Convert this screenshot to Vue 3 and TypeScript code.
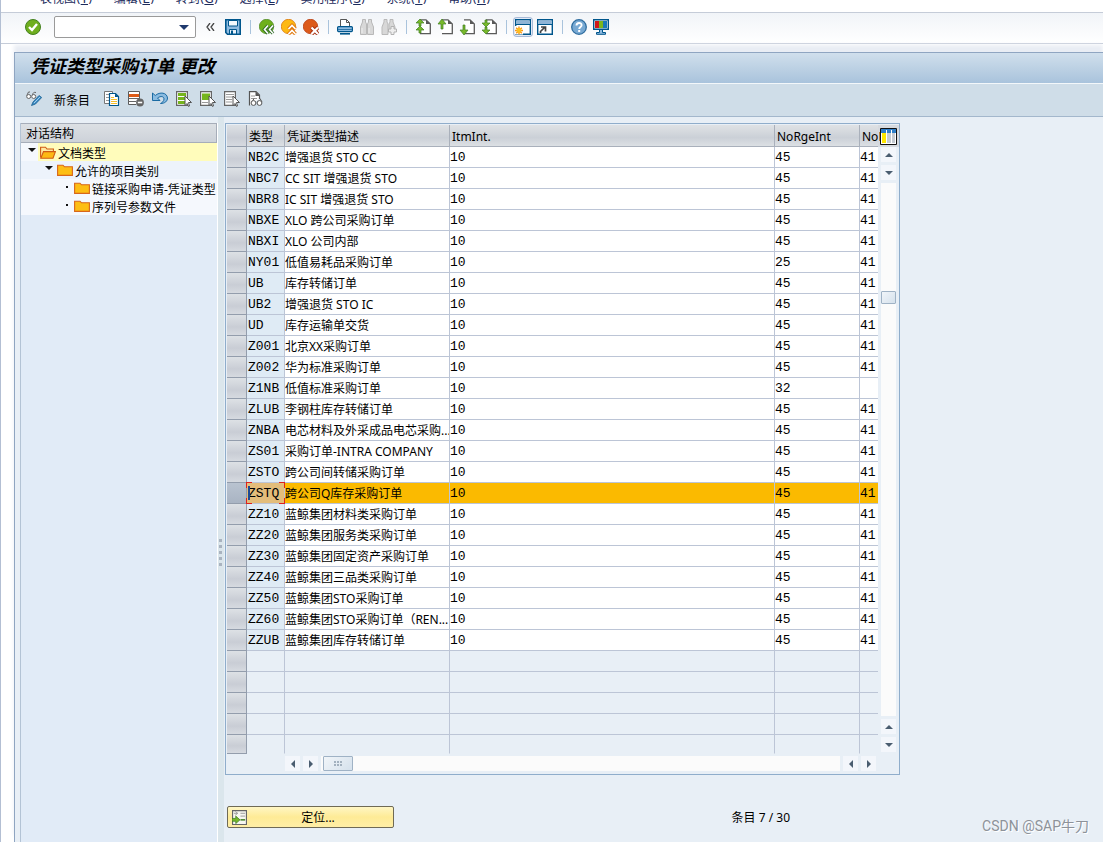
<script setup lang="ts">
import { ref } from 'vue'

interface Row {
  type: string
  desc: string
  itm: string
  rge: string
  ext: string
}

const r = (type: string, desc: string, rge = '45', ext = '41'): Row => ({ type, desc, itm: '10', rge, ext })

const rows: Row[] = [
  r('NB2C', '增强退货 STO CC'),
  r('NBC7', 'CC SIT 增强退货 STO'),
  r('NBR8', 'IC SIT 增强退货 STO'),
  r('NBXE', 'XLO 跨公司采购订单'),
  r('NBXI', 'XLO 公司内部'),
  r('NY01', '低值易耗品采购订单', '25'),
  r('UB', '库存转储订单'),
  r('UB2', '增强退货 STO IC'),
  r('UD', '库存运输单交货'),
  r('Z001', '北京XX采购订单'),
  r('Z002', '华为标准采购订单'),
  r('Z1NB', '低值标准采购订单', '32', ''),
  r('ZLUB', '李钢柱库存转储订单'),
  r('ZNBA', '电芯材料及外采成品电芯采购...'),
  r('ZS01', '采购订单-INTRA COMPANY'),
  r('ZSTO', '跨公司间转储采购订单'),
  r('ZSTQ', '跨公司Q库存采购订单'),
  r('ZZ10', '蓝鲸集团材料类采购订单'),
  r('ZZ20', '蓝鲸集团服务类采购订单'),
  r('ZZ30', '蓝鲸集团固定资产采购订单'),
  r('ZZ40', '蓝鲸集团三品类采购订单'),
  r('ZZ50', '蓝鲸集团STO采购订单'),
  r('ZZ60', '蓝鲸集团STO采购订单（REN...'),
  r('ZZUB', '蓝鲸集团库存转储订单'),
]
const emptyRows = 5
const selected = ref('ZSTQ')
const command = ref('')

const menus = [
  { text: '表视图', key: 'T' },
  { text: '编辑', key: 'E' },
  { text: '转到', key: 'G' },
  { text: '选择', key: 'L' },
  { text: '实用程序', key: 'S' },
  { text: '系统', key: 'Y' },
  { text: '帮助', key: 'H' },
]

const tree = [
  { label: '文档类型', level: 0, open: true, folderOpen: true },
  { label: '允许的项目类别', level: 1, open: true, folderOpen: false },
  { label: '链接采购申请-凭证类型', level: 2, open: false, folderOpen: false },
  { label: '序列号参数文件', level: 2, open: false, folderOpen: false },
]

const pages = [
  { label: '首页', arrows: ['M5 0 9 4H6V7H4V4H1Z', 'M5 7 9 11H6V14H4V11H1Z'] },
  { label: '上一页', arrows: ['M5 0 9 5H6V10H4V5H1Z'] },
  { label: '下一页', arrows: ['M4 6H6V11H9L5 16 1 11H4Z'] },
  { label: '末页', arrows: ['M4 1H6V4H9L5 8 1 4H4Z', 'M4 8H6V11H9L5 15 1 11H4Z'] },
]
</script>

<template>
  <div class="app">
    <nav class="menubar" aria-label="菜单">
      <button v-for="m in menus" :key="m.key" type="button">{{ m.text }}(<u>{{ m.key }}</u>)</button>
    </nav>

    <div class="systembar">
      <button type="button" class="icon" aria-label="输入">
        <svg viewBox="0 0 16 16"><circle cx="8" cy="8" r="7.5" fill="#6fae1e" stroke="#43801f" /><path d="M4 8 7 11 12 5" fill="none" stroke="#fff" stroke-width="2.4" /></svg>
      </button>
      <div class="combo">
        <input v-model="command" type="text" aria-label="命令" />
        <button type="button" aria-label="历史"><svg viewBox="0 0 10 5"><path d="M0 0H10L5 5Z" fill="#1f3a6e" /></svg></button>
      </div>
      <button type="button" class="fold" aria-label="折叠">
        <svg viewBox="0 0 9 8"><path d="M4 0 1 4 4 8M8 0 5 4 8 8" fill="none" stroke="#444" stroke-width="1.3" /></svg>
      </button>
      <button type="button" class="icon save" aria-label="保存">
        <svg viewBox="0 0 16 16"><path d="M.8.8H15.2V15.2H2.5L.8 13.5Z" fill="#8fbbe0" stroke="#00568c" stroke-width="1.6" /><path d="M3.5 1.5H12.5V7H3.5Z" fill="#f4f9fd" stroke="#00568c" /><path d="M4.5 10.5H11.5V15H4.5Z" fill="#e9f2fa" stroke="#00568c" /><path d="M6 11.5H8V15H6Z" fill="#00568c" /></svg>
      </button>
      <i class="sep"></i>
      <button type="button" class="icon" aria-label="返回">
        <svg viewBox="0 0 16 16"><circle cx="7.5" cy="7.5" r="7.2" fill="#6eb01c" stroke="#4b8422" stroke-width=".7" /><path d="M9 6.5 5.5 10.500 9 14.500M14 6.500 10.500 10.500 14 14.500" fill="none" stroke="#2f6b27" stroke-width="3.400" /><path d="M9 6.500 5.500 10.500 9 14.500M14 6.500 10.500 10.500 14 14.500" fill="none" stroke="#fff" stroke-width="1.600" /></svg>
      </button>
      <button type="button" class="icon" aria-label="退出">
        <svg viewBox="0 0 16 16"><circle cx="7.5" cy="7.5" r="7.2" fill="#fdb913" stroke="#d9760c" stroke-width=".8" /><path d="M7.500 10 11 6.500 14.500 10M7.500 15 11 11.500 14.500 15" fill="none" stroke="#e0780c" stroke-width="3.600" /><path d="M7.500 10 11 6.500 14.500 10M7.500 15 11 11.500 14.500 15" fill="none" stroke="#fff" stroke-width="1.700" /></svg>
      </button>
      <button type="button" class="icon" aria-label="取消">
        <svg viewBox="0 0 16 16"><circle cx="7.5" cy="7.5" r="7.2" fill="#dc5a1a" stroke="#b73d12" stroke-width=".8" /><path d="M8.500 8.500 15 15M15 8.500 8.500 15" stroke="#a62f10" stroke-width="4" /><path d="M8.500 8.500 15 15M15 8.500 8.500 15" stroke="#fff" stroke-width="2.2" /></svg>
      </button>
      <i class="sep"></i>
      <button type="button" class="icon" aria-label="打印">
        <svg viewBox="0 0 16 16"><path d="M3.5 8V.5H9.500L12.500 3.500V8" fill="#fff" stroke="#555" /><path d="M9.500.5V3.500H12.500" fill="none" stroke="#555" /><rect x=".6" y="7.600" width="14.800" height="5" rx="1" fill="#8dbbe0" stroke="#00568c" stroke-width="1.200" /><path d="M1 10.500H15" stroke="#2f77ab" /><path d="M3 14H13V15.600H3Z" fill="#00568c" /></svg>
      </button>
      <button type="button" class="icon" aria-label="查找" disabled>
        <svg viewBox="0 0 16 16"><path d="M3.500.5H6.500V3L7.500 5V15.500H1.500V8L3.500 3ZM9.500.5H12.500V3L14.500 8V15.500H8.500V5L9.500 3Z" fill="#d8d8d8" stroke="#b9b9b9" /><path d="M3 9V14M10 9V14" stroke="#efefef" /></svg>
      </button>
      <button type="button" class="icon" aria-label="继续查找" disabled>
        <svg viewBox="0 0 16 16"><path d="M3 .5H6V3L7 5V15.500H1V8L3 3ZM9 .5H12V3L14 8V12H8V5L9 3Z" fill="#d8d8d8" stroke="#b9b9b9" /><path d="M10 7.500H13V10H15.500V13H13V15.500H10V13H7.500V10H10Z" fill="#eee" stroke="#b2b2b2" /></svg>
      </button>
      <i class="sep"></i>
      <button v-for="p in pages" :key="p.label" type="button" class="icon" :aria-label="p.label">
        <svg viewBox="0 0 16 16"><path d="M5 .8H11L15.300 5V14.700H5" fill="#fff" stroke="#5a5a5a" stroke-width="1.300" /><path d="M11 1V5H15.500Z" fill="#5a5a5a" /><path v-for="a in p.arrows" :key="a" :d="a" fill="#78b82a" stroke="#3f7f22" stroke-width=".7" /></svg>
      </button>
      <i class="sep"></i>
      <button type="button" class="icon framed" aria-label="新建会话">
        <svg viewBox="0 0 16 16"><path d="M.7.7H15.300V15.300H.7Z" fill="#fff" stroke="#00568c" stroke-width="1.400" /><path d="M1.400 1.400H14.600V5H1.400Z" fill="#8fb4d6" /><path d="M1 5.500H15" stroke="#00568c" /><path d="M0 7H8V15.500H0Z" fill="#fff" /><path d="M4 7.500V15.500M0 11.500H8M1.200 8.700 6.800 14.300M6.800 8.700 1.200 14.300" stroke="#f7931a" stroke-width="1.400" /><circle cx="4" cy="11.500" r="2.400" fill="#fdc01e" /></svg>
      </button>
      <button type="button" class="icon" aria-label="快捷方式">
        <svg viewBox="0 0 16 16"><path d="M.7.7H15.300V15.300H.7Z" fill="#fff" stroke="#00568c" stroke-width="1.400" /><path d="M1.400 1.400H14.600V5H1.400Z" fill="#8fb4d6" /><path d="M1 5.500H15" stroke="#00568c" /><path d="M3.500 14V12.500L7.500 8.500M4 8H8.500V12.500" fill="none" stroke="#444" stroke-width="1.700" /></svg>
      </button>
      <i class="sep"></i>
      <button type="button" class="icon" aria-label="帮助">
        <svg viewBox="0 0 16 16"><circle cx="8" cy="8" r="7.300" fill="#78a9d3" stroke="#2f6d9f" stroke-width="1.300" /><path d="M5.500 6.500C5.500 3.300 10.700 3.300 10.600 6.200 10.500 8 8.200 8 8.200 10" fill="none" stroke="#fff" stroke-width="1.900" /><rect x="7.200" y="11" width="2" height="2" fill="#fff" /></svg>
      </button>
      <button type="button" class="icon" aria-label="定制布局">
        <svg viewBox="0 0 16 16"><path d="M.7.7H15.300V10.300H.7Z" fill="#fff" stroke="#00568c" stroke-width="1.400" /><path d="M2 2H6V9H2Z" fill="#d01818" /><path d="M6 2H10V9H6Z" fill="#7ab51d" /><path d="M10 2H14V9H10Z" fill="#1878b8" /><path d="M6.500 11V13.500H3.500V15.300H12.500V13.500H9.500V11" fill="#8fbbe0" stroke="#00568c" /></svg>
      </button>
    </div>

    <main class="window">
      <h1>凭证类型采购订单 更改</h1>
      <div class="appbar">
        <button type="button" class="icon" aria-label="显示/更改">
          <svg viewBox="0 0 16 16"><path d="M.8 4.500 2.500 1H4M6.500 4C7 1.500 8 1 10 1.500" fill="none" stroke="#666" /><circle cx="2.700" cy="5.500" r="2" fill="#fff" stroke="#666" /><circle cx="7.700" cy="5.500" r="2" fill="#fff" stroke="#666" /><path d="M5.500 14.500 7 11 13 4.500 15.700 6.500 9.500 13Z" fill="#3d8cc4" stroke="#1b5f91" stroke-width=".8" /><path d="M8 12 14 6" stroke="#a5cdea" /></svg>
        </button>
        <button type="button" class="text">新条目</button>
        <button type="button" class="icon" aria-label="复制为">
          <svg viewBox="0 0 16 16"><path d="M.5.5H8.500V12.500H.5Z" fill="#fff" stroke="#777" /><path d="M2 3.500H5M2 6.500H5M2 9.500H5" stroke="#999" /><path d="M5.500 2.500H11.500L14.500 5.500V14.500H5.500Z" fill="#fff" stroke="#00568c" stroke-width="1.200" /><path d="M11 2.500V6H14.500Z" fill="#00568c" /><path d="M7 6.500H10M7 8.500H13M7 10.500H13M7 12.500H13" stroke="#f5bd2a" stroke-width="1.200" /></svg>
        </button>
        <button type="button" class="icon" aria-label="删除">
          <svg viewBox="0 0 16 16"><path d="M11.500 8V.5H.5V13.500H8" fill="#fff" stroke="#5d5d5d" /><path d="M1 3H11V6H1Z" fill="#dd5b18" /><path d="M.5 7.500H11.500M.5 10.500H8" stroke="#666" /><circle cx="12" cy="11.500" r="3.900" fill="#666" /><path d="M9.800 11.500H14.200" stroke="#fff" stroke-width="1.600" /></svg>
        </button>
        <button type="button" class="icon" aria-label="撤销更改">
          <svg viewBox="0 0 16 16"><path d="M.5 2V9.500H8L5.500 7C9 4.500 12 5.500 12 8S10 11.500 8.500 12.500C13 12.500 15.500 10 15.500 7 15 1.500 8 .5 3.300 4.500Z" fill="#8abbe0" stroke="#1b6ba3" /></svg>
        </button>
        <button type="button" class="icon" aria-label="全选">
          <svg viewBox="0 0 16 16"><path d="M.6.6H11.400V14.400H.6Z" fill="#fff" stroke="#666" stroke-width="1.200" /><path d="M2 3.500H10M2 7.500H10M2 11.500H10" stroke="#76b51d" stroke-width="3" /><path d="M9 5V14.500L11.200 12.500 12.500 15.500 13.500 15 12.500 11.500H15.500Z" fill="#fff" stroke="#555" /></svg>
        </button>
        <button type="button" class="icon" aria-label="选择块">
          <svg viewBox="0 0 16 16"><path d="M.6.6H11.400V14.400H.6Z" fill="#fff" stroke="#666" stroke-width="1.200" /><path d="M2 2.500H10V9H2Z" fill="#76b51d" /><path d="M2 11.500H8" stroke="#999" /><path d="M9 5V14.500L11.200 12.500 12.500 15.500 13.500 15 12.500 11.500H15.500Z" fill="#fff" stroke="#555" /></svg>
        </button>
        <button type="button" class="icon" aria-label="取消全选">
          <svg viewBox="0 0 16 16"><path d="M.6.6H11.400V14.400H.6Z" fill="#fff" stroke="#666" stroke-width="1.200" /><path d="M2 3.500H10M2 6H10M2 8.500H8M2 11H8" stroke="#999" /><path d="M9 5V14.500L11.200 12.500 12.500 15.500 13.500 15 12.500 11.500H15.500Z" fill="#fff" stroke="#555" /></svg>
        </button>
        <button type="button" class="icon" aria-label="显示">
          <svg viewBox="0 0 16 16"><path d="M1.500 14.500V.6H8L11.500 4V8" fill="#fff" stroke="#555" stroke-width="1.200" /><path d="M7.500.5V5H12Z" fill="#555" /><path d="M3 5H7M3 7.500H9" stroke="#999" /><path d="M4 11 6 7.500M14 11 12 7.500" stroke="#555" /><circle cx="5.500" cy="12" r="2.400" fill="#fff" stroke="#555" /><circle cx="11.500" cy="12" r="2.400" fill="#fff" stroke="#555" /></svg>
        </button>
      </div>

      <div class="body">
        <section class="tree">
          <h2>对话结构</h2>
          <ul>
            <li v-for="n in tree" :key="n.label" :class="['lv' + n.level, { current: n.folderOpen }]">
              <span class="node">
                <svg v-if="n.open" class="mark" viewBox="0 0 8 8"><path d="M0 2H8L4 6Z" fill="#111" /></svg>
                <svg v-else class="mark" viewBox="0 0 8 8"><path d="M4 4H6V6H4Z" fill="#111" /></svg>
              </span>
              <a href="#">
                <svg v-if="n.folderOpen" viewBox="0 0 16 13"><path d="M.6 11.500V1.200H5.500L7 3H13.400V6" fill="#ffe9a0" stroke="#cf5a14" stroke-width="1.100" /><path d="M.8 12.300 3.500 5.600H15.400L13 12.300Z" fill="#fdb913" stroke="#cf5a14" stroke-width="1.100" /></svg>
                <svg v-else viewBox="0 0 16 13"><path d="M.6 11.400V1.200H6L7.500 2.800H15.400V11.400Z" fill="#fdbe14" stroke="#d8661a" stroke-width="1.100" /></svg>
                <span>{{ n.label }}</span>
              </a>
            </li>
          </ul>
        </section>
        <div class="splitter"><i></i><i></i><i></i><i></i><i></i></div>

        <section class="content">
          <div class="panel">
            <table>
              <colgroup>
                <col class="c-sel" /><col class="c-type" /><col class="c-desc" /><col /><col class="c-rge" /><col class="c-ext" />
              </colgroup>
              <thead>
                <tr>
                  <th class="sel"></th>
                  <th>类型</th>
                  <th>凭证类型描述</th>
                  <th>ItmInt.</th>
                  <th>NoRgeInt</th>
                  <th><span>NoRgeExt</span></th>
                </tr>
              </thead>
              <tbody>
                <tr v-for="row in rows" :key="row.type" :class="{ selected: row.type === selected }" @click="selected = row.type">
                  <td class="sel"></td>
                  <td class="mono key">{{ row.type }}<i v-if="row.type === selected" class="focus"></i></td>
                  <td>{{ row.desc }}</td>
                  <td class="mono">{{ row.itm }}</td>
                  <td class="mono">{{ row.rge }}</td>
                  <td class="mono">{{ row.ext }}</td>
                </tr>
                <tr v-for="n in emptyRows" :key="n" class="empty">
                  <td class="sel"></td><td></td><td></td><td></td><td></td><td></td>
                </tr>
              </tbody>
            </table>

            <div class="vside">
              <button type="button" class="config" aria-label="配置">
                <svg viewBox="0 0 17 17"><path d="M.5.500H16.500V16.500H.5Z" fill="#fff" stroke="#111" /><path d="M1 1H16V5H1Z" fill="#2f7fc8" /><path d="M2 5H6V15H2Z" fill="#ffe800" /><path d="M7 5H11V15H7ZM12 5H15V15H12Z" fill="#c5cbd2" /><path d="M6.500 2V15M11.500 2V15" stroke="#fff" /></svg>
              </button>
              <div class="vbar">
                <button type="button" aria-label="上滚"><svg viewBox="0 0 8 4"><path d="M0 4H8L4 0Z" fill="#4a5d70" /></svg></button>
                <button type="button" aria-label="下滚"><svg viewBox="0 0 8 4"><path d="M0 0H8L4 4Z" fill="#4a5d70" /></svg></button>
                <div class="vtrack"><span class="vthumb"></span></div>
                <button type="button" aria-label="上一行"><svg viewBox="0 0 8 4"><path d="M0 4H8L4 0Z" fill="#4a5d70" /></svg></button>
                <button type="button" aria-label="下一行"><svg viewBox="0 0 8 4"><path d="M0 0H8L4 4Z" fill="#4a5d70" /></svg></button>
              </div>
            </div>

            <div class="hbar">
              <button type="button" aria-label="左滚"><svg class="h" viewBox="0 0 4 8"><path d="M4 0V8L0 4Z" fill="#4a5d70" /></svg></button>
              <button type="button" aria-label="右滚"><svg class="h" viewBox="0 0 4 8"><path d="M0 0V8L4 4Z" fill="#4a5d70" /></svg></button>
              <div class="htrack">
                <span class="hthumb"><svg viewBox="0 0 8 7"><path d="M0 2H2M3 2H5M6 2H8M0 5H2M3 5H5M6 5H8" stroke="#a3b1bf" stroke-width="2" /></svg></span>
              </div>
              <button type="button" aria-label="左一列"><svg class="h" viewBox="0 0 4 8"><path d="M4 0V8L0 4Z" fill="#4a5d70" /></svg></button>
              <button type="button" aria-label="右一列"><svg class="h" viewBox="0 0 4 8"><path d="M0 0V8L4 4Z" fill="#4a5d70" /></svg></button>
            </div>
          </div>

          <div class="footer">
            <button type="button" class="position">
              <svg viewBox="0 0 16 16"><path d="M.6.600H15.400V15.400H.6Z" fill="#f7f7f0" stroke="#666" stroke-width="1.200" /><path d="M2 3.500H6M3.500 1.500 6 3.500 3.500 5.500M9 3.500H14M9 6.500H14" fill="none" stroke="#999" /><path d="M9 10.500H14" stroke="#3f7f22" stroke-width="1.600" /><path d="M0 9H4V6.500L8.500 10.500 4 14.500V12H0Z" fill="#78b82a" stroke="#3f7f22" stroke-width=".8" /></svg>
              <span>定位...</span>
            </button>
            <span class="count">条目 7 / 30</span>
          </div>
        </section>
      </div>
    </main>
    <div class="watermark">CSDN @SAP牛刀</div>
  </div>
</template>

<style>
body {
  margin: 0;
}
</style>

<style scoped>
.app {
  position: relative;
  display: flex;
  flex-direction: column;
  min-height: 100vh;
  overflow: hidden;
  box-sizing: border-box;
  border-left: 1px solid #b3bfd3;
  background: #fff;
  color: #000;
  font: 12px/18px 'Noto Sans', 'Noto Sans CJK SC', sans-serif;
}
.app *,
.app *::before {
  box-sizing: border-box;
}
button {
  padding: 0;
  border: 0;
  background: none;
  color: inherit;
  font: inherit;
}
svg {
  display: block;
}

.menubar {
  display: flex;
  align-items: flex-end;
  gap: 21px;
  height: 13px;
  padding: 0 0 6px 39px;
  overflow: hidden;
  border-bottom: 1px solid #c5ccd8;
}
.menubar button {
  flex: none;
  color: #1c2b5c;
  font: 12px/14px 'DejaVu Sans', 'Noto Sans CJK SC', sans-serif;
}

.systembar {
  display: flex;
  align-items: center;
  gap: 6px;
  height: 31px;
  padding: 0 0 2px 24px;
  border-bottom: 1px solid #c5ccd8;
  background: linear-gradient(#f1f4f8, #fff);
}
.icon,
.icon svg {
  flex: none;
  width: 16px;
  height: 16px;
}
.framed {
  border-radius: 2px;
  box-shadow: 0 0 0 1px #e3eaf6, 0 0 0 2px #a9bbd8;
}
.sep {
  width: 6px;
  height: 14px;
  background: linear-gradient(#a9c3dc, #a9c3dc) 3px 0 / 1px 100% no-repeat;
}
.combo {
  display: flex;
  width: 142px;
  height: 22px;
  margin-left: 7px;
  border: 1px solid #9a9a9a;
  border-radius: 2px;
  background: #fff;
}
.combo input {
  flex: 1;
  min-width: 0;
  border: 0;
  outline: 0;
  background: none;
  font: inherit;
}
.combo button {
  width: 20px;
}
.combo button svg {
  width: 10px;
  height: 5px;
  margin-left: 4px;
}
.fold {
  margin: 0 4px;
}
.fold svg {
  width: 9px;
  height: 8px;
}

.window {
  display: flex;
  flex: 1;
  flex-direction: column;
  margin-left: 13px;
  margin-top: 8px;
  border-top: 1px solid #8fa5c1;
  border-left: 1px solid #8fa5c1;
  background: #e8eff6;
  box-shadow: 0 -7px 4px #e9edf4;
}
h1 {
  height: 31px;
  margin: 0;
  padding-left: 15px;
  border-bottom: 1px solid #f3f7fa;
  background: linear-gradient(#d0dfec, #a9c3dc);
  font: italic bold 18px/27px 'Noto Sans', 'Noto Sans CJK SC', sans-serif;
}
.appbar {
  display: flex;
  align-items: center;
  gap: 8px;
  height: 33px;
  padding: 0 0 2px 11px;
  border-bottom: 1px solid #a3b7cc;
  background: #cfdde8;
}
.appbar .text {
  margin: 0 6px 0 4px;
  padding-top: 3px;
  line-height: 16px;
}
.body {
  display: flex;
  flex: 1;
  padding-left: 5px;
}

.tree {
  width: 198px;
  margin-top: 6px;
  border-left: 1px solid #b3c3d5;
  border-right: 1px solid #fff;
  background: #e1ebf7;
}
.tree h2 {
  height: 20px;
  margin: 0;
  padding-left: 5px;
  border: 1px solid #a6adb9;
  border-left: 0;
  background: linear-gradient(#dce0e4, #cdd2d9);
  font: 12px/20px 'Noto Sans', 'Noto Sans CJK SC', sans-serif;
}
.tree ul {
  margin: 0;
  padding: 0;
  list-style: none;
}
.tree li {
  display: flex;
  height: 18px;
  background: #f5f8fd;
  white-space: nowrap;
}
.tree .node {
  display: flex;
  flex: none;
  align-items: center;
  justify-content: flex-end;
  width: 17px;
  padding-right: 2px;
}
.tree .lv1 {
  padding-left: 17px;
  background: #edf3fb;
}
.tree .lv2 {
  padding-left: 34px;
}
.mark {
  width: 8px;
  height: 8px;
  margin-bottom: 4px;
}
.tree a {
  display: flex;
  flex: 1;
  align-items: center;
  gap: 2px;
  padding-left: 2px;
  overflow: hidden;
  color: inherit;
  line-height: 18px;
  text-decoration: none;
}
.tree a span {
  padding-top: 3px;
}
.tree .current a {
  background: #fffcbb;
}
.tree a svg {
  flex: none;
  width: 16px;
  height: 13px;
}

.splitter {
  display: flex;
  flex-direction: column;
  gap: 3px;
  width: 6px;
  padding: 422px 0 0 1px;
  background: #dbe6ec;
}
.splitter i {
  width: 3px;
  height: 3px;
  background: #a9b3bf;
}

.content {
  flex: 1;
  min-width: 0;
  padding: 6px 0 0 1px;
}
.panel {
  display: grid;
  grid-template-columns: minmax(0, 1fr) 21px;
  width: 675px;
  max-width: 100%;
  padding: 1px 0 3px 1px;
  border: 1px solid #8fadcb;
  background: linear-gradient(#d6dadf, #d6dadf) 100% 1px / 22px 22px no-repeat;
}
table {
  width: 100%;
  border-spacing: 0;
  table-layout: fixed;
}
.c-sel {
  width: 20px;
}
.c-type {
  width: 38px;
}
.c-desc {
  width: 165px;
}
.c-rge {
  width: 85px;
}
.c-ext {
  width: 18px;
}
th,
td {
  height: 21px;
  padding: 2px 0 0;
  overflow: hidden;
  border-right: 1px solid #bcc5d6;
  border-bottom: 1px solid #bcc5d6;
  background: #fff;
  line-height: 18px;
  white-space: nowrap;
}
th {
  height: 22px;
  padding-left: 2px;
  border-color: #a9b0bb;
  background: linear-gradient(#dfe2e5, #cbd0d7 60%, #dce0e4);
  font-weight: normal;
  text-align: left;
}
th:last-child,
td:last-child {
  border-right: 0;
}
th:last-child {
  overflow: visible;
}
th span {
  display: block;
  margin-right: -2px;
  overflow: hidden;
}
.mono {
  font: 13px/18px 'Liberation Mono', monospace;
}
.key {
  position: relative;
  padding-left: 1px;
  background: #dfebf5;
}
.sel {
  border-color: #939dac;
  background: linear-gradient(#dde1e5, #c9cdd5 60%, #d6dae0);
}
.empty td:not(.sel) {
  background: #e8eff6;
}
.empty:last-child td {
  height: 19px;
}
.empty:last-child td:not(.sel) {
  border-bottom-color: #e8eff6;
}
.selected td {
  background: #fbba00;
}
.selected .sel {
  background: linear-gradient(#b9c3d0, #a9b4c3);
}
.selected .key {
  overflow: visible;
  background: #e3bd7b;
}
.focus {
  position: absolute;
  inset: -1px -1px -1px -1px;
  background:
    linear-gradient(#e0201b, #e0201b) 0 0 / 6px 1px,
    linear-gradient(#e0201b, #e0201b) 0 0 / 1px 6px,
    linear-gradient(#e0201b, #e0201b) 100% 0 / 6px 1px,
    linear-gradient(#e0201b, #e0201b) 100% 0 / 1px 6px,
    linear-gradient(#e0201b, #e0201b) 0 100% / 6px 1px,
    linear-gradient(#e0201b, #e0201b) 0 100% / 1px 6px,
    linear-gradient(#e0201b, #e0201b) 100% 100% / 6px 1px,
    linear-gradient(#e0201b, #e0201b) 100% 100% / 1px 6px,
    linear-gradient(#1e4a94, #1e4a94) 2px 4px / 2px 14px;
  background-repeat: no-repeat;
}

.vside {
  display: flex;
  flex-direction: column;
}
.config {
  display: flex;
  flex: none;
  align-items: center;
  height: 22px;
  padding-left: 2px;
}
.config svg {
  width: 17px;
  height: 17px;
}
.vbar {
  display: flex;
  flex: 1;
  flex-direction: column;
  gap: 3px;
  padding: 0 3px 2px;
}
.vbar button,
.hbar button {
  display: grid;
  flex: none;
  place-items: center;
  width: 15px;
  height: 15px;
  background: #f3f6fb;
}
.vbar svg {
  width: 8px;
  height: 4px;
}
.vtrack {
  flex: 1;
  width: 15px;
  padding-top: 108px;
  background: #fbfbfb;
}
.vthumb,
.hthumb {
  display: block;
  border: 1px solid #9fb2c5;
  border-radius: 1px;
  background: linear-gradient(135deg, #f1f5f9, #d5e1ec);
}
.vthumb {
  height: 13px;
}
.hbar {
  display: flex;
  gap: 3px;
  margin: 2px 2px 0 58px;
}
.hbar svg.h {
  width: 4px;
  height: 8px;
}
.htrack {
  flex: 1;
  padding-left: 2px;
  background: #fbfbfb;
}
.hthumb {
  display: grid;
  place-items: center;
  width: 30px;
  height: 15px;
}
.hthumb svg {
  width: 8px;
  height: 7px;
}

.footer {
  display: flex;
  align-items: center;
  max-width: 675px;
  padding: 31px 0 14px 2px;
}
.position {
  display: flex;
  align-items: center;
  width: 167px;
  height: 22px;
  padding-left: 4px;
  border: 1px solid #6f6a55;
  border-radius: 2px;
  background: linear-gradient(#fff6c4, #feeb96 50%, #ffeea6);
}
.position svg {
  width: 15px;
  height: 15px;
}
.position span {
  flex: 1;
  padding: 2px 4px 0 0;
  text-align: center;
}
.count {
  margin-left: auto;
  padding: 2px 110px 0 0;
}
.watermark {
  position: absolute;
  right: 14px;
  bottom: 5px;
  color: #8d9299;
  font: 14px/22px Roboto, 'Noto Sans CJK SC', sans-serif;
  text-shadow: 1px 1px 0 #fff;
}
</style>
